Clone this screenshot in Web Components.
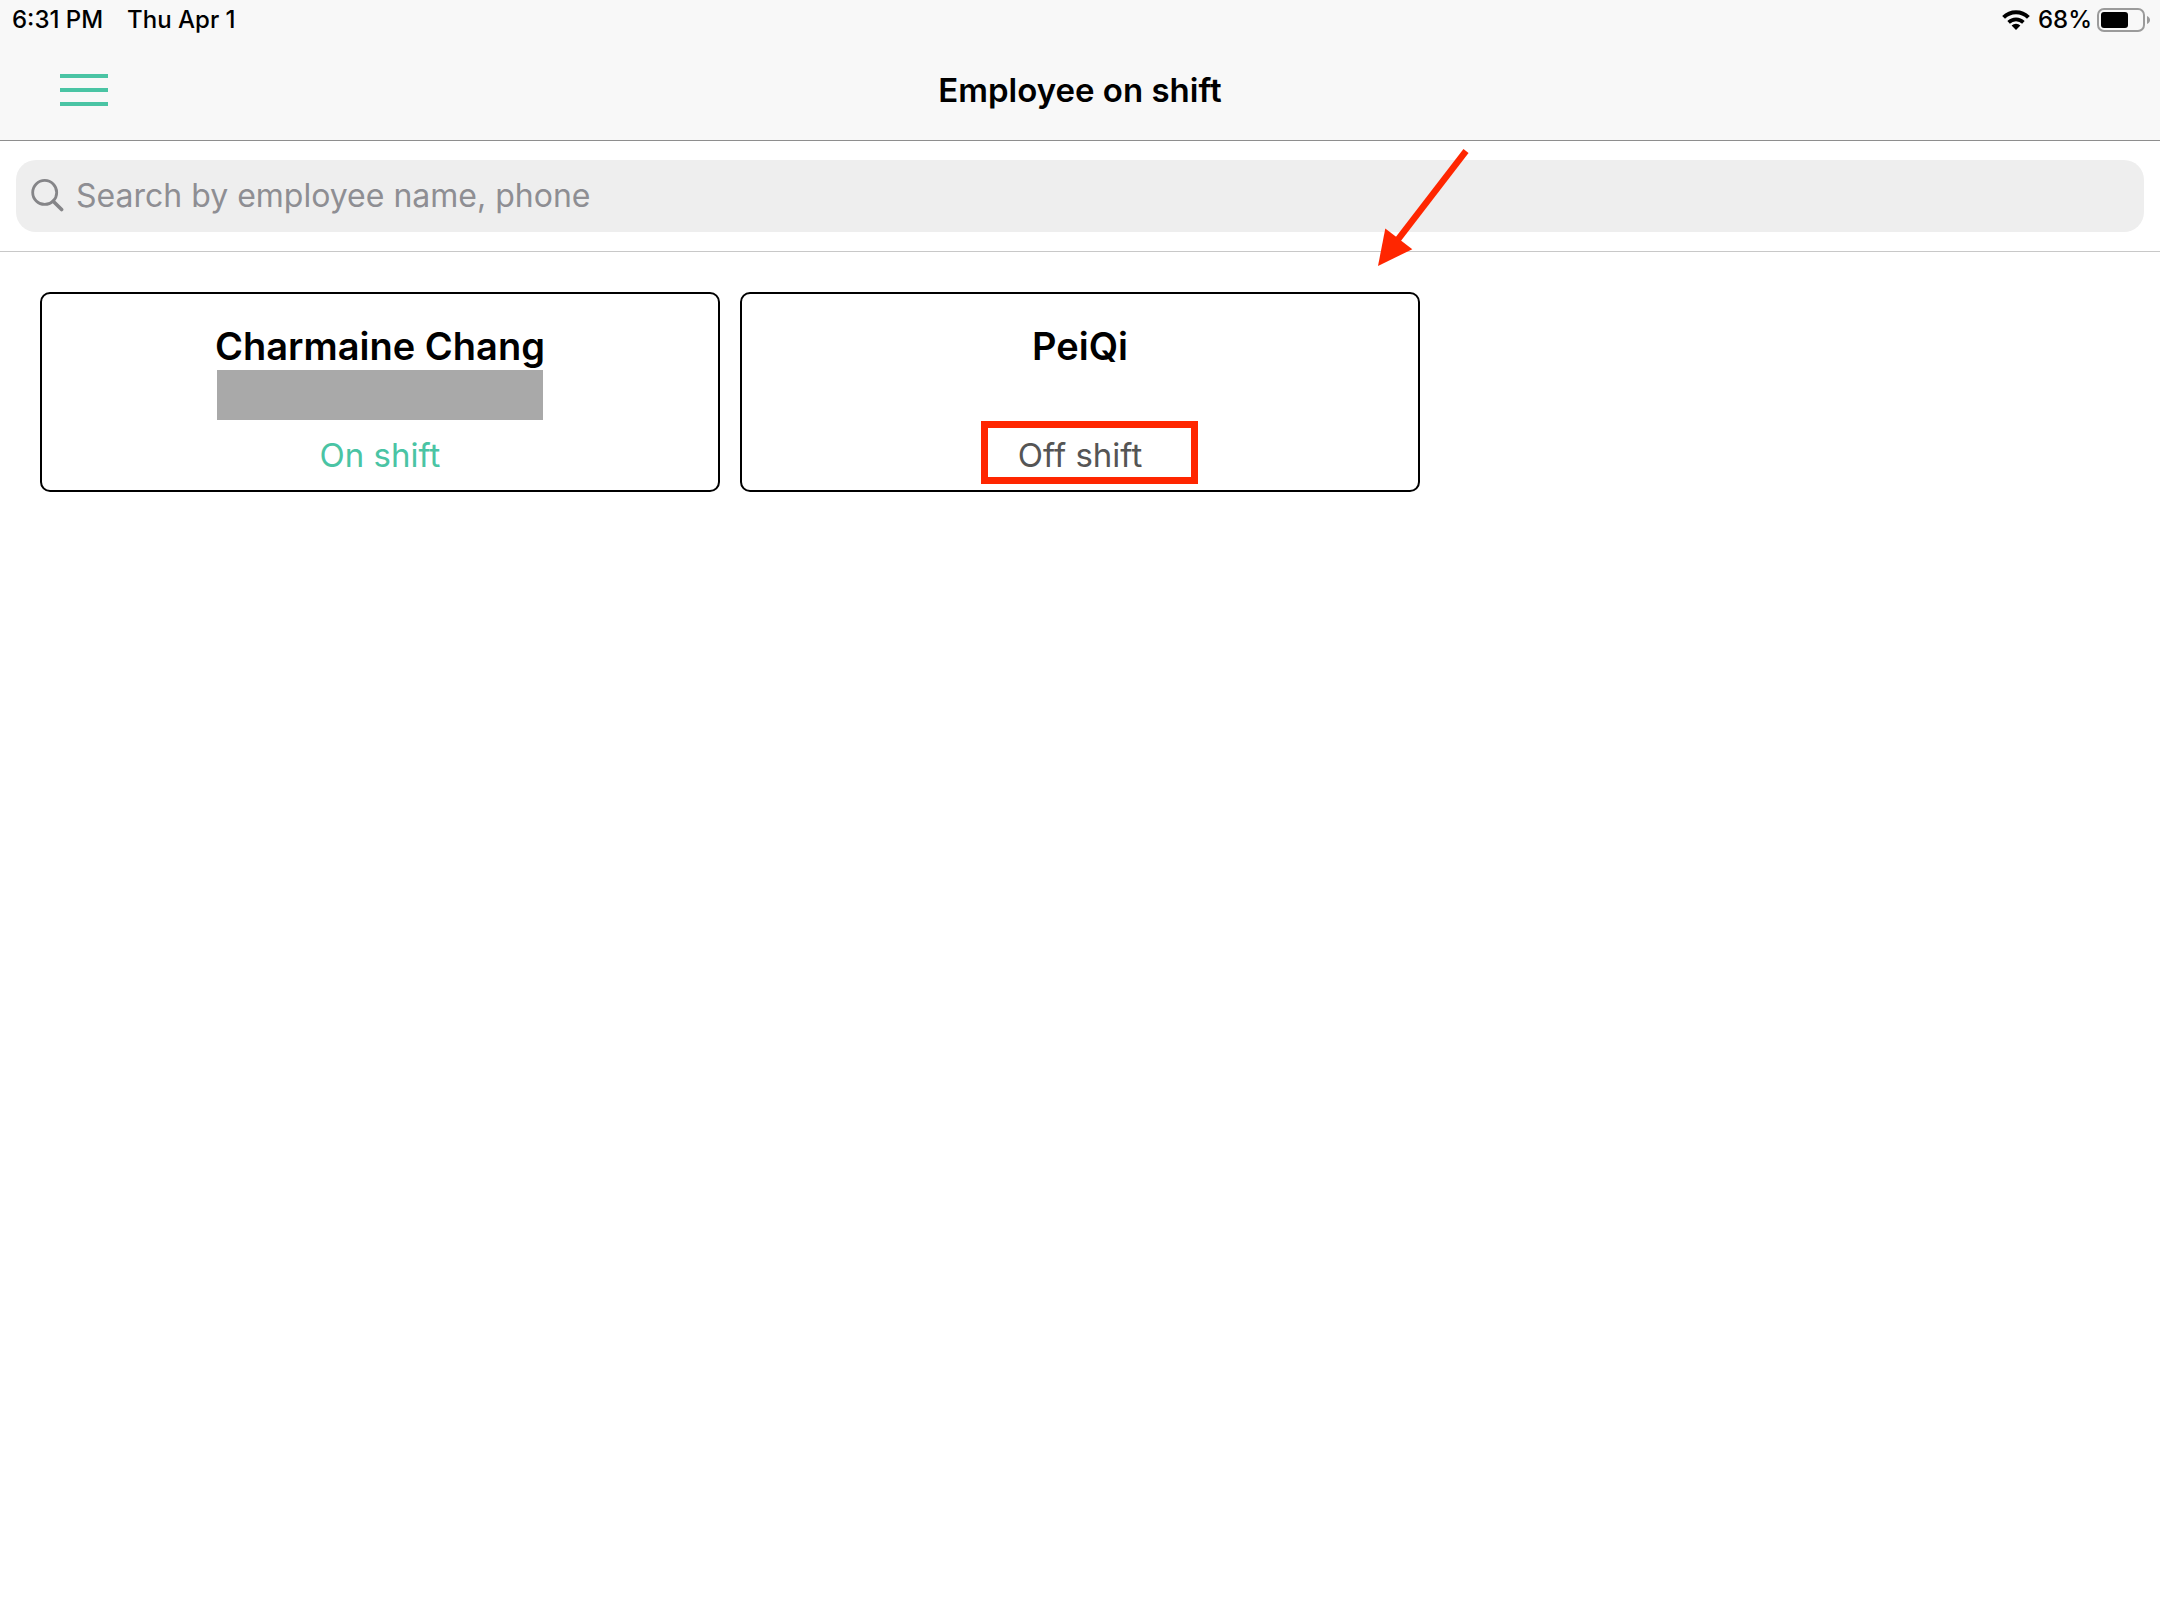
<!DOCTYPE html>
<html lang="en">
<head>
<meta charset="utf-8">
<title>Employee on shift</title>
<style>
  html, body { margin: 0; background: #fff; }
  body { font-family: Inter, "Liberation Sans", sans-serif; color: #000; }
</style>
</head>
<body>
<shift-app></shift-app>
<script>
class BaseElement extends HTMLElement {
  connectedCallback() {
    if (this.shadowRoot) return;
    this.attachShadow({ mode: 'open' }).innerHTML =
      '<style>*{box-sizing:border-box}:host{box-sizing:border-box}</style>' + this.render();
  }
}

customElements.define('status-bar', class extends BaseElement {
  render() {
    return `
    <style>
      :host { display: flex; align-items: center; justify-content: space-between; height: 40px; padding: 0 9px 0 12px; font-size: 24px; line-height: 32px; font-weight: 500; }
      div { display: flex; align-items: center; }
      .left { gap: 24px; }
      .right { gap: 5px; }
      .wifi { margin-right: 3px; }
      svg { display: block; }
    </style>
    <div class="left"><span>6:31 PM</span><span>Thu Apr 1</span></div>
    <div class="right">
      <svg class="wifi" width="28" height="20" viewBox="0 0 28 20" aria-hidden="true">
        <g fill="none" stroke="#000" stroke-width="4">
          <path d="M1.6 7.4a17.6 17.6 0 0 1 24.8 0"/>
          <path d="M6.6 12.4a10.6 10.6 0 0 1 14.8 0" stroke-width="3.6"/>
        </g>
        <path d="M14 20l-4.4-4.5a6.4 6.4 0 0 1 8.8 0z"/>
      </svg>
      <span>68%</span>
      <svg width="54" height="24" viewBox="0 0 54 24" aria-hidden="true">
        <rect x="1" y="1" width="46" height="22" rx="6" fill="none" stroke="#9b9b9b" stroke-width="2"/>
        <rect x="4" y="4" width="27" height="16" rx="3"/>
        <path d="M50 8c4 1.4 4 6.6 0 8z" fill="#9b9b9b"/>
      </svg>
    </div>`;
  }
});

customElements.define('nav-bar', class extends BaseElement {
  render() {
    return `
    <style>
      :host { display: grid; grid-template-columns: 1fr auto 1fr; align-items: center; height: 100px; padding: 0 60px; }
      button { justify-self: start; display: block; border: 0; padding: 0; background: none; color: #4ac4a4; }
      svg { display: block; }
      h1 { margin: 0; font-size: 33px; line-height: 44px; font-weight: 600; }
    </style>
    <button type="button" aria-label="Menu">
      <svg width="48" height="32" viewBox="0 0 48 32" fill="currentColor"><path d="M0 0h48v4H0zM0 14h48v4H0zM0 28h48v4H0z"/></svg>
    </button>
    <h1><slot></slot></h1>`;
  }
});

customElements.define('search-bar', class extends BaseElement {
  render() {
    return `
    <style>
      :host { display: block; padding: 19px 16px; border-bottom: 1px solid #c8c8c8; }
      label { display: flex; align-items: center; gap: 12px; height: 72px; padding: 0 15px; border-radius: 20px; background: #eee; }
      svg { flex: none; display: block; }
      input { flex: 1; min-width: 0; border: 0; padding: 0; outline: 0; background: none; font: inherit; font-size: 32px; line-height: 44px; height: 44px; color: #000; }
      input::placeholder { color: #8e8e93; opacity: 1; }
    </style>
    <label>
      <svg width="33" height="34" viewBox="0 0 33 34" fill="none" stroke="#858588" aria-hidden="true">
        <circle cx="13.7" cy="13.4" r="12" stroke-width="2.8"/>
        <path d="M22.2 22.2l8.400 8.400" stroke-width="3.6" stroke-linecap="round"/>
      </svg>
      <input type="text" aria-label="Search" placeholder="Search by employee name, phone">
    </label>`;
  }
});

customElements.define('employee-card', class extends BaseElement {
  render() {
    return `
    <style>
      :host { display: flex; flex-direction: column; align-items: center; padding: 28px 12px 12px; border: 2px solid #000; border-radius: 10px; background: #fff; }
      h2 { margin: 0; font-size: 38px; line-height: 48px; font-weight: 600; }
      .phone { width: 326px; height: 50px; margin-bottom: 12px; }
      :host([masked]) .phone { background: #a9a9a9; }
      .status { position: relative; font-size: 33px; line-height: 46px; color: #555; }
      :host([active]) .status { color: #4ac4a4; }
      :host([marked]) .status::after { content: ""; position: absolute; inset: -11px -56px -6px -37px; border: 7px solid #ff2600; }
    </style>
    <h2><slot name="name"></slot></h2>
    <div class="phone"></div>
    <div class="status"><slot></slot></div>`;
  }
});

customElements.define('pointer-arrow', class extends BaseElement {
  render() {
    return `
    <style>
      :host { display: block; position: absolute; left: 1378px; top: 148px; pointer-events: none; }
      svg { display: block; }
    </style>
    <svg width="92" height="120" viewBox="0 0 92 120" aria-hidden="true">
      <path d="M88 3L18 94" stroke="#ff2600" stroke-width="6.4"/>
      <path d="M0 118L7.3 80.5L34.3 101.2z" fill="#ff2600"/>
    </svg>`;
  }
});

customElements.define('shift-app', class extends BaseElement {
  render() {
    return `
    <style>
      :host { display: block; min-height: 100vh; position: relative; }
      header { background: #f8f8f8; border-bottom: 1px solid #8e8e8e; }
      main { display: grid; grid-template-columns: repeat(3, 1fr); gap: 20px; padding: 40px; }
    </style>
    <header>
      <status-bar></status-bar>
      <nav-bar>Employee on shift</nav-bar>
    </header>
    <search-bar></search-bar>
    <main>
      <employee-card masked active><span slot="name">Charmaine Chang</span>On shift</employee-card>
      <employee-card marked><span slot="name">PeiQi</span>Off shift</employee-card>
    </main>
    <pointer-arrow></pointer-arrow>`;
  }
});
</script>
</body>
</html>
